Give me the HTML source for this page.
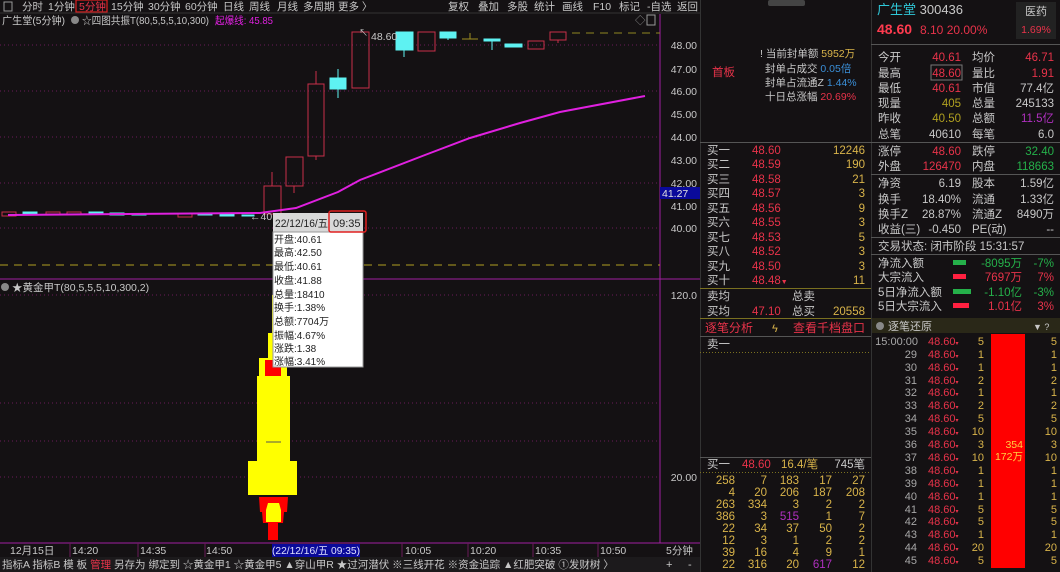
<!DOCTYPE html>
<html><head><meta charset="utf-8"><style>
html,body{margin:0;padding:0;background:#141113;overflow:hidden}
svg{display:block;font-family:"Liberation Sans","Noto Sans CJK SC",sans-serif}
</style></head><body>
<svg width="1060" height="572" viewBox="0 0 1060 572" xmlns="http://www.w3.org/2000/svg">
<rect width="1060" height="572" fill="#141113"/>
<!-- top bar -->
<g font-size="10.5" fill="#c8c8c8">
<rect x="4" y="2" width="8" height="9" fill="none" stroke="#999"/>
<text x="22" y="10">分时</text><text x="48" y="10">1分钟</text>
<rect x="76" y="0" width="31" height="12" fill="none" stroke="#e02020" stroke-width="1.2"/>
<text x="79" y="10" fill="#e8334a">5分钟</text>
<text x="111" y="10">15分钟</text><text x="148" y="10">30分钟</text><text x="185" y="10">60分钟</text>
<text x="223" y="10">日线</text><text x="249" y="10">周线</text><text x="277" y="10">月线</text><text x="303" y="10">多周期</text><text x="338" y="10">更多 〉</text>
<text x="448" y="10">复权</text><text x="478" y="10">叠加</text><text x="507" y="10">多股</text><text x="534" y="10">统计</text><text x="562" y="10">画线</text><text x="593" y="10">F10</text><text x="619" y="10">标记</text><text x="647" y="10">-自选</text><text x="677" y="10">返回</text>
</g>
<line x1="0" y1="13" x2="700" y2="13" stroke="#333"/>
<g font-size="10.5">
<text x="2" y="24" fill="#c8c8c8" textLength="63" lengthAdjust="spacingAndGlyphs">广生堂(5分钟)</text>
<circle cx="75" cy="20" r="4" fill="#888"/>
<text x="82" y="24" fill="#c8c8c8" textLength="127" lengthAdjust="spacingAndGlyphs">☆四图共振T(80,5,5,5,10,300)</text>
<text x="215" y="24" fill="#e020e0" textLength="58" lengthAdjust="spacingAndGlyphs">起爆线: 45.85</text>
<text x="635" y="24" fill="#888">◇</text><rect x="647" y="15" width="8" height="10" fill="none" stroke="#999"/>
</g>
<!-- axes -->
<line x1="660" y1="14" x2="660" y2="543" stroke="#a020a0"/>
<line x1="0" y1="279" x2="700" y2="279" stroke="#a020a0"/>
<line x1="0" y1="543" x2="700" y2="543" stroke="#a020a0"/>
<g stroke="#6a1a5a" stroke-dasharray="1,3">
<line x1="0" y1="45" x2="660" y2="45"/><line x1="0" y1="91" x2="660" y2="91"/><line x1="0" y1="137" x2="660" y2="137"/><line x1="0" y1="183" x2="660" y2="183"/><line x1="0" y1="228" x2="660" y2="228"/>
<line x1="0" y1="295" x2="660" y2="295"/><line x1="0" y1="403" x2="660" y2="403"/><line x1="0" y1="441" x2="660" y2="441"/><line x1="0" y1="477" x2="660" y2="477"/>
</g>
<g font-size="10.5" fill="#c8c8c8" text-anchor="end">
<text x="697" y="49">48.00</text><text x="697" y="73">47.00</text><text x="697" y="95">46.00</text><text x="697" y="118">45.00</text><text x="697" y="141">44.00</text><text x="697" y="164">43.00</text><text x="697" y="187">42.00</text><text x="697" y="210">41.00</text><text x="697" y="232">40.00</text>
<text x="697" y="299">120.0</text><text x="697" y="481">20.00</text>
</g>
<rect x="660" y="187" width="40" height="12" fill="#0a0a9a"/>
<text x="662" y="197" font-size="10.5" fill="#e0e0e0">41.27</text>
<line x1="0" y1="265" x2="660" y2="265" stroke="#b0a020" stroke-dasharray="8,6"/>
<line x1="572" y1="33" x2="660" y2="33" stroke="#908820" stroke-dasharray="8,6"/>
<g stroke="#c8304a" fill="none">
<rect x="2" y="212" width="14" height="4"/><rect x="46" y="212" width="14" height="2"/><rect x="67" y="212" width="14" height="2"/><rect x="178" y="214" width="14" height="3"/>
<rect x="264" y="186" width="17" height="28"/><line x1="272" y1="172" x2="272" y2="186"/>
<rect x="286" y="157" width="17" height="29"/><line x1="294" y1="186" x2="294" y2="193"/>
<rect x="308" y="84" width="16" height="72"/><line x1="316" y1="71" x2="316" y2="84"/><line x1="316" y1="156" x2="316" y2="160"/>
<rect x="352" y="32" width="17" height="56"/>
<rect x="418" y="32" width="17" height="19"/>
<rect x="528" y="41" width="16" height="8"/>
<rect x="550" y="32" width="16" height="8"/><line x1="558" y1="40" x2="558" y2="43"/>
</g>
<g fill="#5ef2f2" stroke="#5ef2f2">
<rect x="23" y="212" width="14" height="2"/><rect x="89" y="212" width="14" height="1"/><rect x="110" y="213" width="14" height="2"/><rect x="132" y="214" width="14" height="1"/><rect x="198" y="213" width="14" height="2"/><rect x="220" y="214" width="14" height="2"/><rect x="242" y="215" width="12" height="1"/>
<rect x="330" y="78" width="16" height="11"/><line x1="338" y1="69" x2="338" y2="98"/>
<rect x="396" y="32" width="17" height="18"/><line x1="404" y1="50" x2="404" y2="57"/>
<rect x="440" y="32" width="16" height="6"/><line x1="448" y1="38" x2="448" y2="40"/>
<rect x="484" y="39" width="16" height="2"/><line x1="492" y1="41" x2="492" y2="50"/>
<rect x="505" y="44" width="17" height="3"/>
</g>
<line x1="462" y1="39" x2="478" y2="39" stroke="#a09020"/><line x1="470" y1="33" x2="470" y2="39" stroke="#a09020"/>
<polyline points="8,215 260,213 296,208 338,192 360,180 425,155 470,138 520,123 560,112 645,96" fill="none" stroke="#e020e0" stroke-width="2"/>
<text x="371" y="40" font-size="10.5" fill="#c8c8c8">48.60</text>
<text x="359" y="36" font-size="9" fill="#c8c8c8">↖</text>
<text x="250" y="220" font-size="10.5" fill="#c8c8c8">←40</text>
<circle cx="5" cy="287" r="4" fill="#888"/>
<text x="12" y="291" font-size="10.5" fill="#c8c8c8">★黄金甲T(80,5,5,5,10,300,2)</text>
<g>
<rect x="272" y="295" width="5" height="40" fill="#ffff00"/>
<rect x="268" y="333" width="12" height="30" fill="#ffff00"/>
<rect x="259" y="358" width="28" height="20" fill="#ffff00"/>
<rect x="265" y="360" width="16" height="16" fill="#ff0000"/>
<rect x="257" y="376" width="33" height="86" fill="#ffff00"/>
<rect x="248" y="461" width="49" height="34" fill="#ffff00"/>
<line x1="266" y1="442" x2="281" y2="442" stroke="#555"/>
<polygon points="259,497 288,497 287,512 284,512 283,523 278,523 278,540 268,540 268,523 263,523 262,512 260,512" fill="#ff0000"/>
<polygon points="268,503 279,503 281,510 281,522 266,522 266,510" fill="#ffff00"/>
</g>
<rect x="273" y="213" width="90" height="19" fill="#d8d8d8"/>
<rect x="273" y="232" width="90" height="135" fill="#ffffff" stroke="#999"/>
<text x="275" y="227" font-size="11" fill="#222" textLength="53" lengthAdjust="spacingAndGlyphs">22/12/16/五</text>
<rect x="329" y="211" width="37" height="21" fill="none" stroke="#e02020" stroke-width="1.5" rx="2"/>
<text x="333" y="227" font-size="11" fill="#222">09:35</text>
<g font-size="10" fill="#222">
<text x="274" y="243">开盘:40.61</text><text x="274" y="256">最高:42.50</text><text x="274" y="270">最低:40.61</text><text x="274" y="284">收盘:41.88</text><text x="274" y="298">总量:18410</text><text x="274" y="311">换手:1.38%</text><text x="274" y="325">总额:7704万</text><text x="274" y="339">振幅:4.67%</text><text x="274" y="352">涨跌:1.38</text><text x="274" y="365">涨幅:3.41%</text>
</g>
<g font-size="10.5" fill="#c8c8c8">
<text x="10" y="554">12月15日</text><text x="72" y="554">14:20</text><text x="140" y="554">14:35</text><text x="206" y="554">14:50</text>
<rect x="272" y="544" width="88" height="13" fill="#0a0a9a"/><text x="272" y="554" fill="#e0e0ff" textLength="88" lengthAdjust="spacingAndGlyphs">(22/12/16/五 09:35)</text>
<text x="405" y="554">10:05</text><text x="470" y="554">10:20</text><text x="535" y="554">10:35</text><text x="600" y="554">10:50</text><text x="666" y="554">5分钟</text>
</g>
<g stroke="#6a1a5a"><line x1="70" y1="543" x2="70" y2="557"/><line x1="138" y1="543" x2="138" y2="557"/><line x1="205" y1="543" x2="205" y2="557"/><line x1="402" y1="543" x2="402" y2="557"/><line x1="468" y1="543" x2="468" y2="557"/><line x1="533" y1="543" x2="533" y2="557"/><line x1="598" y1="543" x2="598" y2="557"/></g>
<rect x="0" y="557" width="700" height="15" fill="#1c1a1c"/>
<text x="2" y="568" font-size="10.5" fill="#c8c8c8">指标A 指标B 模 板 <tspan fill="#e8334a">管理</tspan> 另存为 绑定到 ☆黄金甲1 ☆黄金甲5 ▲穿山甲R ★过河潜伏 ※三线开花 ※资金追踪 ▲红肥突破 ①发财树 〉</text>
<text x="666" y="568" font-size="11" fill="#c8c8c8">+</text><text x="688" y="568" font-size="11" fill="#c8c8c8">-</text>
<!-- right panel -->
<line x1="700.5" y1="0" x2="700.5" y2="572" stroke="#333"/>
<line x1="871.5" y1="0" x2="871.5" y2="572" stroke="#333"/>
<rect x="768" y="0" width="37" height="6" fill="#444" rx="2"/>
<text x="712" y="76" font-size="11.5" fill="#e8334a">首板</text>
<g font-size="10.5" fill="#c8c8c8">
<text x="760" y="57">! 当前封单额 <tspan fill="#d9b44a">5952万</tspan></text>
<text x="765" y="72">封单占成交 <tspan fill="#3a8fd8">0.05倍</tspan></text>
<text x="765" y="86">封单占流通Z <tspan fill="#3a8fd8">1.44%</tspan></text>
<text x="765" y="100">十日总涨幅 <tspan fill="#e8334a">20.69%</tspan></text>
</g>
<line x1="700" y1="142.5" x2="871" y2="142.5" stroke="#555"/>
<g font-size="11.5">
<g fill="#c8c8c8"><text x="707" y="154">买一</text><text x="707" y="168">买二</text><text x="707" y="183">买三</text><text x="707" y="197">买四</text><text x="707" y="212">买五</text><text x="707" y="226">买六</text><text x="707" y="241">买七</text><text x="707" y="255">买八</text><text x="707" y="270">买九</text><text x="707" y="284">买十</text></g>
<g fill="#e8334a"><text x="752" y="154">48.60</text><text x="752" y="168">48.59</text><text x="752" y="183">48.58</text><text x="752" y="197">48.57</text><text x="752" y="212">48.56</text><text x="752" y="226">48.55</text><text x="752" y="241">48.53</text><text x="752" y="255">48.52</text><text x="752" y="270">48.50</text><text x="752" y="284">48.48<tspan font-size="7">▼</tspan></text></g>
<g fill="#d9b44a" text-anchor="end"><text x="865" y="154">12246</text><text x="865" y="168">190</text><text x="865" y="183">21</text><text x="865" y="197">3</text><text x="865" y="212">9</text><text x="865" y="226">3</text><text x="865" y="241">5</text><text x="865" y="255">3</text><text x="865" y="270">3</text><text x="865" y="284">11</text></g>
</g>
<line x1="700" y1="288.5" x2="871" y2="288.5" stroke="#7a7020"/>
<g font-size="11.5" fill="#c8c8c8"><text x="707" y="300">卖均</text><text x="792" y="300">总卖</text><text x="707" y="315">买均</text><text x="752" y="315" fill="#e8334a">47.10</text><text x="792" y="315">总买</text><text x="865" y="315" fill="#d9b44a" text-anchor="end">20558</text></g>
<line x1="700" y1="318.5" x2="871" y2="318.5" stroke="#7a7020"/>
<text x="705" y="332" font-size="12" fill="#e8334a">逐笔分析</text><text x="772" y="332" font-size="11" fill="#d9b44a">ϟ</text><text x="793" y="332" font-size="12" fill="#e8334a">查看千档盘口</text>
<line x1="700" y1="336.5" x2="871" y2="336.5" stroke="#555"/>
<text x="707" y="348" font-size="11.5" fill="#c8c8c8">卖一</text>
<line x1="700" y1="352.5" x2="871" y2="352.5" stroke="#7a7020" stroke-dasharray="1,2"/>
<line x1="700" y1="457.5" x2="871" y2="457.5" stroke="#555"/>
<g font-size="11.5"><text x="707" y="468" fill="#c8c8c8">买一</text><text x="742" y="468" fill="#e8334a">48.60</text><text x="781" y="468" fill="#d9b44a">16.4/笔</text><text x="865" y="468" fill="#c8c8c8" text-anchor="end">745笔</text></g>
<line x1="700" y1="472.5" x2="871" y2="472.5" stroke="#7a7020" stroke-dasharray="1,2"/>
<g font-size="11.5" fill="#d9b44a" text-anchor="end">
<text x="735" y="484">258</text><text x="767" y="484">7</text><text x="799" y="484">183</text><text x="832" y="484">17</text><text x="865" y="484">27</text>
<text x="735" y="496">4</text><text x="767" y="496">20</text><text x="799" y="496">206</text><text x="832" y="496">187</text><text x="865" y="496">208</text>
<text x="735" y="508">263</text><text x="767" y="508">334</text><text x="799" y="508">3</text><text x="832" y="508">2</text><text x="865" y="508">2</text>
<text x="735" y="520">386</text><text x="767" y="520">3</text><text x="799" y="520" fill="#b030c0">515</text><text x="832" y="520">1</text><text x="865" y="520">7</text>
<text x="735" y="532">22</text><text x="767" y="532">34</text><text x="799" y="532">37</text><text x="832" y="532">50</text><text x="865" y="532">2</text>
<text x="735" y="544">12</text><text x="767" y="544">3</text><text x="799" y="544">1</text><text x="832" y="544">2</text><text x="865" y="544">2</text>
<text x="735" y="556">39</text><text x="767" y="556">16</text><text x="799" y="556">4</text><text x="832" y="556">9</text><text x="865" y="556">1</text>
<text x="735" y="568">22</text><text x="767" y="568">316</text><text x="799" y="568">20</text><text x="832" y="568" fill="#b030c0">617</text><text x="865" y="568">12</text>
</g>
<text x="877" y="14" font-size="13" fill="#2fc8d8">广生堂 <tspan fill="#c8c8c8">300436</tspan></text>
<text x="877" y="34" font-size="14" fill="#ff3b4f" font-weight="bold">48.60</text>
<text x="920" y="34" font-size="12" fill="#e8334a">8.10  20.00%</text>
<rect x="1016" y="2" width="40" height="37" fill="#222"/>
<text x="1036" y="15" font-size="11" fill="#c8c8c8" text-anchor="middle">医药</text>
<text x="1036" y="33" font-size="10.5" fill="#e8334a" text-anchor="middle">1.69%</text>
<line x1="871" y1="44.5" x2="1060" y2="44.5" stroke="#555"/>
<g font-size="11.5">
<g fill="#c8c8c8"><text x="878" y="61">今开</text><text x="878" y="77">最高</text><text x="878" y="92">最低</text><text x="878" y="107">现量</text><text x="878" y="122">昨收</text><text x="878" y="138">总笔</text>
<text x="972" y="61">均价</text><text x="972" y="77">量比</text><text x="972" y="92">市值</text><text x="972" y="107">总量</text><text x="972" y="122">总额</text><text x="972" y="138">每笔</text></g>
<g text-anchor="end"><text x="961" y="61" fill="#e8334a">40.61</text><text x="961" y="77" fill="#e8334a">48.60</text><text x="961" y="92" fill="#e8334a">40.61</text><text x="961" y="107" fill="#b0a020">405</text><text x="961" y="122" fill="#b0a020">40.50</text><text x="961" y="138" fill="#c8c8c8">40610</text>
<text x="1054" y="61" fill="#e8334a">46.71</text><text x="1054" y="77" fill="#e8334a">1.91</text><text x="1054" y="92" fill="#c8c8c8">77.4亿</text><text x="1054" y="107" fill="#c8c8c8">245133</text><text x="1054" y="122" fill="#b030c0">11.5亿</text><text x="1054" y="138" fill="#c8c8c8">6.0</text></g>
</g>
<rect x="931" y="65" width="31" height="15" fill="none" stroke="#777"/>
<line x1="871" y1="142.5" x2="1060" y2="142.5" stroke="#555"/>
<g font-size="11.5"><g fill="#c8c8c8"><text x="878" y="155">涨停</text><text x="878" y="170">外盘</text><text x="972" y="155">跌停</text><text x="972" y="170">内盘</text></g>
<g text-anchor="end"><text x="961" y="155" fill="#e8334a">48.60</text><text x="961" y="170" fill="#e8334a">126470</text><text x="1054" y="155" fill="#25b04a">32.40</text><text x="1054" y="170" fill="#25b04a">118663</text></g></g>
<line x1="871" y1="174.5" x2="1060" y2="174.5" stroke="#555"/>
<g font-size="11.5" fill="#c8c8c8"><text x="878" y="187">净资</text><text x="878" y="203">换手</text><text x="878" y="218">换手Z</text><text x="878" y="233">收益(三)</text>
<text x="972" y="187">股本</text><text x="972" y="203">流通</text><text x="972" y="218">流通Z</text><text x="972" y="233">PE(动)</text>
<g text-anchor="end"><text x="961" y="187">6.19</text><text x="961" y="203">18.40%</text><text x="961" y="218">28.87%</text><text x="961" y="233">-0.450</text><text x="1054" y="187">1.59亿</text><text x="1054" y="203">1.33亿</text><text x="1054" y="218">8490万</text><text x="1054" y="233">--</text></g></g>
<line x1="871" y1="237.5" x2="1060" y2="237.5" stroke="#555"/>
<text x="878" y="250" font-size="11.5" fill="#c8c8c8">交易状态: 闭市阶段 15:31:57</text>
<line x1="871" y1="254.5" x2="1060" y2="254.5" stroke="#555"/>
<g font-size="11.5"><g fill="#c8c8c8"><text x="878" y="267">净流入额</text><text x="878" y="281">大宗流入</text><text x="878" y="296">5日净流入额</text><text x="878" y="310">5日大宗流入</text></g>
<rect x="953" y="260" width="13" height="5" fill="#25b04a"/><rect x="953" y="274" width="13" height="5" fill="#ff2040"/><rect x="953" y="289" width="18" height="5" fill="#25b04a"/><rect x="953" y="303" width="16" height="5" fill="#ff2040"/>
<g text-anchor="end"><text x="1022" y="267" fill="#25b04a">-8095万</text><text x="1022" y="281" fill="#e8334a">7697万</text><text x="1022" y="296" fill="#25b04a">-1.10亿</text><text x="1022" y="310" fill="#e8334a">1.01亿</text>
<text x="1054" y="267" fill="#25b04a">-7%</text><text x="1054" y="281" fill="#e8334a">7%</text><text x="1054" y="296" fill="#25b04a">-3%</text><text x="1054" y="310" fill="#e8334a">3%</text></g></g>
<rect x="872" y="318" width="188" height="15" fill="#2a2818"/>
<circle cx="880" cy="326" r="4" fill="#888"/>
<text x="888" y="330" font-size="11" fill="#c8c8c8">逐笔还原</text>
<text x="1033" y="330" font-size="9" fill="#c8c8c8">▼ ?</text>
<rect x="991" y="334" width="34" height="234" fill="#ff0000"/>
<text x="1023" y="448" font-size="10.5" fill="#ffd040" text-anchor="end">354</text>
<text x="1023" y="460" font-size="10.5" fill="#ffd040" text-anchor="end">172万</text>
<g font-size="11">
<g fill="#a8a8a8" text-anchor="end"><text x="918" y="345">15:00:00</text><text x="917" y="358">29</text><text x="917" y="371">30</text><text x="917" y="384">31</text><text x="917" y="396">32</text><text x="917" y="409">33</text><text x="917" y="422">34</text><text x="917" y="435">35</text><text x="917" y="448">36</text><text x="917" y="461">37</text><text x="917" y="474">38</text><text x="917" y="487">39</text><text x="917" y="500">40</text><text x="917" y="513">41</text><text x="917" y="525">42</text><text x="917" y="538">43</text><text x="917" y="551">44</text><text x="917" y="564">45</text></g>
<g fill="#e8334a"><text x="928" y="345">48.60<tspan font-size="6">▾</tspan></text><text x="928" y="358">48.60<tspan font-size="6">▾</tspan></text><text x="928" y="371">48.60<tspan font-size="6">▾</tspan></text><text x="928" y="384">48.60<tspan font-size="6">▾</tspan></text><text x="928" y="396">48.60<tspan font-size="6">▾</tspan></text><text x="928" y="409">48.60<tspan font-size="6">▾</tspan></text><text x="928" y="422">48.60<tspan font-size="6">▾</tspan></text><text x="928" y="435">48.60<tspan font-size="6">▾</tspan></text><text x="928" y="448">48.60<tspan font-size="6">▾</tspan></text><text x="928" y="461">48.60<tspan font-size="6">▾</tspan></text><text x="928" y="474">48.60<tspan font-size="6">▾</tspan></text><text x="928" y="487">48.60<tspan font-size="6">▾</tspan></text><text x="928" y="500">48.60<tspan font-size="6">▾</tspan></text><text x="928" y="513">48.60<tspan font-size="6">▾</tspan></text><text x="928" y="525">48.60<tspan font-size="6">▾</tspan></text><text x="928" y="538">48.60<tspan font-size="6">▾</tspan></text><text x="928" y="551">48.60<tspan font-size="6">▾</tspan></text><text x="928" y="564">48.60<tspan font-size="6">▾</tspan></text></g>
<g fill="#d9b44a" text-anchor="end"><text x="984" y="345">5</text><text x="984" y="358">1</text><text x="984" y="371">1</text><text x="984" y="384">2</text><text x="984" y="396">1</text><text x="984" y="409">2</text><text x="984" y="422">5</text><text x="984" y="435">10</text><text x="984" y="448">3</text><text x="984" y="461">10</text><text x="984" y="474">1</text><text x="984" y="487">1</text><text x="984" y="500">1</text><text x="984" y="513">5</text><text x="984" y="525">5</text><text x="984" y="538">1</text><text x="984" y="551">20</text><text x="984" y="564">5</text>
<text x="1057" y="345">5</text><text x="1057" y="358">1</text><text x="1057" y="371">1</text><text x="1057" y="384">2</text><text x="1057" y="396">1</text><text x="1057" y="409">2</text><text x="1057" y="422">5</text><text x="1057" y="435">10</text><text x="1057" y="448">3</text><text x="1057" y="461">10</text><text x="1057" y="474">1</text><text x="1057" y="487">1</text><text x="1057" y="500">1</text><text x="1057" y="513">5</text><text x="1057" y="525">5</text><text x="1057" y="538">1</text><text x="1057" y="551">20</text><text x="1057" y="564">5</text></g>
</g>
</svg>
</body></html>
